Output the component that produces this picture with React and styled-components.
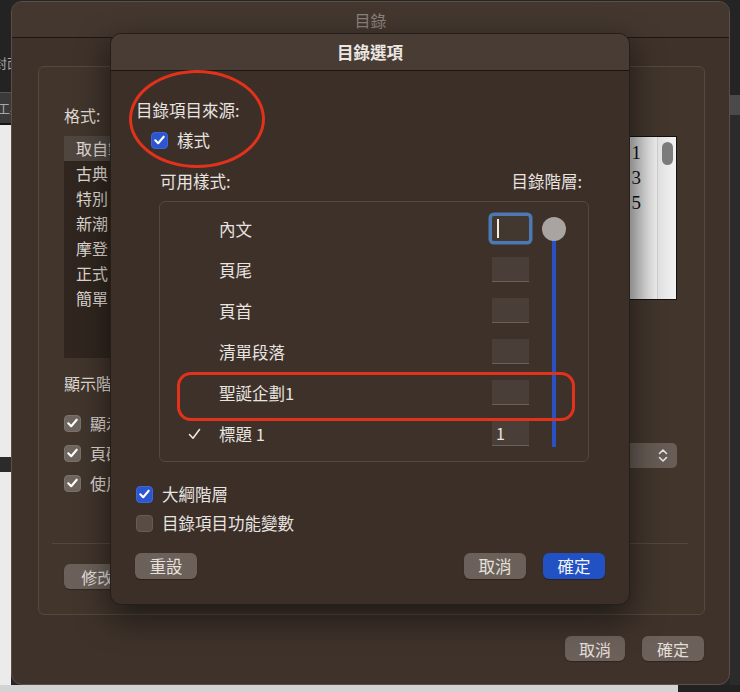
import React from 'react'
import styled, { createGlobalStyle } from 'styled-components'

const GlobalStyle = createGlobalStyle`
  html, body {
    margin: 0;
    padding: 0;
    background: #252525;
  }
  body {
    font-family: "Noto Sans CJK TC", "Noto Sans", sans-serif;
  }
  * {
    box-sizing: border-box;
  }
`

const formats = ['取自範本', '古典', '特別', '新潮', '摩登', '正式', '簡單']
const options = ['顯示頁碼', '頁碼靠右對齊', '使用超連結']
const previewPages = [1, 3, 5]
const styleRows = [
  { name: '內文', level: '', focused: true },
  { name: '頁尾', level: '' },
  { name: '頁首', level: '' },
  { name: '清單段落', level: '' },
  { name: '聖誕企劃1', level: '', marked: true },
  { name: '標題 1', level: '1', checked: true },
]

function CheckMark() {
  return (
    <svg width="11" height="10" viewBox="0 0 11 10">
      <path d="M1.3 5.3 L4.2 8.2 L9.7 1.7" fill="none" stroke="#fff" strokeWidth="2.1" strokeLinecap="round" strokeLinejoin="round" />
    </svg>
  )
}

function RowCheck() {
  return (
    <svg width="13" height="12" viewBox="0 0 13 12">
      <path d="M1.5 6.5 L5 10.2 L11.5 1.5" fill="none" stroke="#e8e4e0" strokeWidth="1.6" strokeLinecap="round" strokeLinejoin="round" />
    </svg>
  )
}

function UpDown() {
  return (
    <svg width="10" height="15" viewBox="0 0 10 15">
      <path d="M1.5 5.5 L5 2 L8.5 5.5 M1.5 9.5 L5 13 L8.5 9.5" fill="none" stroke="#e6e2de" strokeWidth="1.6" strokeLinecap="round" strokeLinejoin="round" />
    </svg>
  )
}

export default function App() {
  return (
    <>
      <GlobalStyle />
      <Desktop>
        <TopArea>
          <LeftStrip>
            <StripBlock $h={92} $bg="#232323">
              <StripText $top={53} $shift={-6}>封面頁</StripText>
            </StripBlock>
            <StripBlock $h={31} $bg="#3a3a3a" $line>
              <StripText $top={5} $shift={-3}>工具</StripText>
            </StripBlock>
            <StripBlock $h={334} $bg="#ebebeb" $edge />
            <StripBlock $h={15} $bg="#2b2b2b" />
            <StripBlock $h={213} $bg="#ebebeb" />
          </LeftStrip>

          <Window>
            <TitleBar>目錄</TitleBar>
            <WindowBody>
              <GroupBox>
                <GroupTop>
                  {/* only the left edge of this column shows beside the sheet */}
                  <LeftCol>
                    <FieldLabel>格式:</FieldLabel>
                    <FormatList>
                      {formats.map((f, i) => (
                        <FormatItem key={f} $selected={i === 0}>{f}</FormatItem>
                      ))}
                    </FormatList>
                    <FieldLabel $mt={15}>顯示階層:</FieldLabel>
                    <OptionList>
                      {options.map(o => (
                        <OptionRow key={o}>
                          <CheckBox $tone="grey"><CheckMark /></CheckBox>
                          <OptionText>{o}</OptionText>
                        </OptionRow>
                      ))}
                    </OptionList>
                  </LeftCol>
                  <RightCol>
                    <Preview>
                      <PreviewPage>
                        {previewPages.map(p => (
                          <PreviewLine key={p}>{p}</PreviewLine>
                        ))}
                      </PreviewPage>
                      <PreviewScroll>
                        <ScrollThumb />
                      </PreviewScroll>
                    </Preview>
                    <Popup>
                      <UpDown />
                    </Popup>
                  </RightCol>
                </GroupTop>
                <GroupRule />
                <PushButton $w={80}>修改...</PushButton>
              </GroupBox>
              <ButtonRow>
                <PushButton $w={60}>取消</PushButton>
                <PushButton $w={62}>確定</PushButton>
              </ButtonRow>
            </WindowBody>

            <Sheet>
              <SheetHeader>目錄選項</SheetHeader>
              <SheetBody>
                <Ellipse />
                <Label>目錄項目來源:</Label>
                <CheckLine $mt={10} $indent={15}>
                  <CheckBox $tone="blue"><CheckMark /></CheckBox>
                  <Label>樣式</Label>
                </CheckLine>
                <ColumnHeads>
                  <Label>可用樣式:</Label>
                  <Label>目錄階層:</Label>
                </ColumnHeads>
                <StyleTable>
                  <StyleRows>
                    {styleRows.map(r => (
                      <StyleRow key={r.name} $marked={r.marked}>
                        <CheckCell>{r.checked && <RowCheck />}</CheckCell>
                        <Label>{r.name}</Label>
                        <LevelField $focused={r.focused}>
                          {r.focused ? <Caret /> : r.level}
                        </LevelField>
                      </StyleRow>
                    ))}
                  </StyleRows>
                  <SliderColumn>
                    <Knob />
                    <Track />
                  </SliderColumn>
                </StyleTable>
                <CheckLine $mt={22}>
                  <CheckBox $tone="blue"><CheckMark /></CheckBox>
                  <Label>大綱階層</Label>
                </CheckLine>
                <CheckLine $mt={9}>
                  <CheckBox $tone="off" />
                  <Label>目錄項目功能變數</Label>
                </CheckLine>
                <SheetButtons>
                  <SheetButton>重設</SheetButton>
                  <Spacer />
                  <SheetButton>取消</SheetButton>
                  <SheetButton $primary>確定</SheetButton>
                </SheetButtons>
              </SheetBody>
            </Sheet>
          </Window>

          <RightStrip>
            <StripBlock $h={95} $bg="#242424" />
            <StripBlock $h={20} $bg="#4a4a4a" />
            <StripBlock $h={570} $bg="#2b2b2b" />
          </RightStrip>
        </TopArea>
        <BottomStrip />
      </Desktop>
    </>
  )
}

const Desktop = styled.div`
  width: 740px;
  height: 692px;
  display: flex;
  flex-direction: column;
  overflow: hidden;
  background: #252525;
`

const TopArea = styled.div`
  display: flex;
  height: 685px;
`

const LeftStrip = styled.div`
  width: 11px;
  display: flex;
  flex-direction: column;
  overflow: hidden;
`

const RightStrip = styled(LeftStrip)`
  width: 10px;
`

const StripBlock = styled.div`
  height: ${p => p.$h}px;
  flex-shrink: 0;
  background: ${p => p.$bg};
  border-top: ${p => (p.$line ? '1px solid #555' : p.$edge ? '2px solid #151515' : 'none')};
  overflow: hidden;
`

const StripText = styled.div`
  margin-top: ${p => p.$top}px;
  margin-left: ${p => p.$shift}px;
  font-size: 13px;
  color: #a8a8a8;
  white-space: nowrap;
`

const BottomStrip = styled.div`
  height: 7px;
  background: linear-gradient(to right, #d3d3d3 0, #d3d3d3 678px, #222 678px);
`

const Window = styled.div`
  position: relative;
  width: 719px;
  height: 684px;
  margin-top: 1px;
  flex-shrink: 0;
  display: flex;
  flex-direction: column;
  background: #3e322a;
  border: 1px solid #5b4f46;
  border-radius: 11px;
`

const TitleBar = styled.div`
  height: 36px;
  flex-shrink: 0;
  display: flex;
  align-items: center;
  justify-content: center;
  font-size: 16px;
  color: #8b827a;
  background: #43372f;
  border-bottom: 1px solid #1d1713;
  border-radius: 10px 10px 0 0;
`

const WindowBody = styled.div`
  flex: 1;
  display: flex;
  flex-direction: column;
  padding: 28px 24px 0 26px;
`

const GroupBox = styled.div`
  height: 549px;
  display: flex;
  flex-direction: column;
  padding: 38px 27px 0 25px;
  background: #41352c;
  border: 1px solid #54483f;
  border-radius: 6px;
`

const GroupTop = styled.div`
  height: 438px;
  display: flex;
  justify-content: space-between;
`

const LeftCol = styled.div`
  width: 48px;
  display: flex;
  flex-direction: column;
  overflow: hidden;
`

const FieldLabel = styled.div`
  margin-top: ${p => p.$mt || 0}px;
  font-size: 16px;
  line-height: 20px;
  color: #ddd7d1;
  white-space: nowrap;
`

const FormatList = styled.div`
  margin-top: 11px;
  height: 222px;
  background: #30261f;
`

const FormatItem = styled.div`
  height: 25px;
  line-height: 25px;
  padding-left: 12px;
  font-size: 16px;
  color: #ddd7d1;
  white-space: nowrap;
  background: ${p => (p.$selected ? '#4f4640' : 'transparent')};
`

const OptionList = styled.div`
  margin-top: 20px;
  display: flex;
  flex-direction: column;
  gap: 10px;
`

const OptionRow = styled.div`
  display: flex;
  align-items: center;
  gap: 9px;
  height: 20px;
`

const OptionText = styled.span`
  font-size: 16px;
  color: #ddd7d1;
  white-space: nowrap;
`

const CheckBox = styled.span`
  width: 17px;
  height: 17px;
  flex-shrink: 0;
  display: flex;
  align-items: center;
  justify-content: center;
  border-radius: 4px;
  background: ${p => (p.$tone === 'blue' ? '#2b56cf' : p.$tone === 'grey' ? '#6e655e' : '#574d46')};
  border: 1px solid ${p => (p.$tone === 'blue' ? '#3d66d8' : p.$tone === 'grey' ? '#7a716a' : '#675c54')};
`

const RightCol = styled.div`
  width: 230px;
  padding-top: 31px;
  display: flex;
  flex-direction: column;
`

const Preview = styled.div`
  height: 164px;
  display: flex;
  border: 1px solid #111;
  background: #f6f6f6;
`

const PreviewPage = styled.div`
  flex: 1;
  padding: 3px 16px 0 12px;
  background: linear-gradient(to right, #f8f8f8 0, #f8f8f8 calc(100% - 30px), #c3c3c3 calc(100% - 26px), #ededed 100%);
`

const PreviewLine = styled.div`
  text-align: right;
  font-family: "Liberation Serif", serif;
  font-size: 19px;
  line-height: 25px;
  color: #111;
`

const PreviewScroll = styled.div`
  width: 19px;
  padding: 5px 0 0 4px;
  border-left: 1px solid #d0d0d0;
  background: linear-gradient(to right, #e3e3e3, #f2f2f2);
`

const ScrollThumb = styled.div`
  width: 11px;
  height: 23px;
  border-radius: 6px;
  background: #7c7c7c;
`

const Popup = styled.div`
  margin-top: 143px;
  height: 25px;
  display: flex;
  align-items: center;
  justify-content: flex-end;
  padding: 0 9px 0 10px;
  border-radius: 5px;
  background: linear-gradient(to right, #4c4139, #685e57);
`

const GroupRule = styled.div`
  height: 1px;
  margin: 0 -11px 0 -12px;
  background: #54483f;
`

const PushButton = styled.div`
  width: ${p => p.$w}px;
  height: 25px;
  margin-top: 20px;
  display: flex;
  align-items: center;
  justify-content: center;
  font-size: 16px;
  color: #e3ded9;
  background: #6b615a;
  border-radius: 6px;
  box-shadow: 0 1px 1px rgba(0, 0, 0, 0.25);
`

const ButtonRow = styled.div`
  display: flex;
  justify-content: flex-end;
  gap: 17px;
  padding-right: 1px;
  margin-top: 1px;
`

const Sheet = styled.div`
  position: absolute;
  left: 98px;
  top: 31px;
  width: 520px;
  height: 572px;
  display: flex;
  flex-direction: column;
  background: #3b2f28;
  border: 1px solid #261e19;
  border-radius: 11px;
  box-shadow: 0 12px 32px rgba(0, 0, 0, 0.55), inset 0 1px 0 rgba(255, 255, 255, 0.08);
`

const SheetHeader = styled.div`
  height: 37px;
  flex-shrink: 0;
  display: flex;
  align-items: center;
  justify-content: center;
  font-size: 16.5px;
  font-weight: 600;
  color: #ebe7e3;
  background: #483c34;
  border-bottom: 1px solid #1c1613;
  border-radius: 10px 10px 0 0;
`

const SheetBody = styled.div`
  position: relative;
  flex: 1;
  display: flex;
  flex-direction: column;
  padding: 29px 24px 0 25px;
`

const Ellipse = styled.div`
  position: absolute;
  left: 18px;
  top: -1px;
  width: 136px;
  height: 98px;
  border: 3px solid #e2321c;
  border-radius: 50%;
  pointer-events: none;
`

const Label = styled.span`
  font-size: 16.5px;
  line-height: 20px;
  color: #e8e4e0;
  white-space: nowrap;
`

const CheckLine = styled.div`
  margin-top: ${p => p.$mt}px;
  margin-left: ${p => p.$indent || 0}px;
  height: 20px;
  display: flex;
  align-items: center;
  gap: 9px;
`

const ColumnHeads = styled.div`
  margin-top: 21px;
  padding: 0 23px 0 24px;
  display: flex;
  justify-content: space-between;
`

const StyleTable = styled.div`
  margin: 10px 0 0 23px;
  width: 430px;
  height: 261px;
  display: flex;
  background: #3d3129;
  border: 1px solid #54483f;
  border-radius: 6px;
`

const StyleRows = styled.div`
  width: 369px;
  padding-top: 6px;
  display: flex;
  flex-direction: column;
`

const StyleRow = styled.div`
  position: relative;
  height: 41px;
  display: grid;
  grid-template-columns: 31px 1fr 37px;
  align-items: center;
  padding-left: 28px;

  &::after {
    content: "";
    display: ${p => (p.$marked ? 'block' : 'none')};
    position: absolute;
    left: 17px;
    top: 0;
    width: 392px;
    height: 43px;
    border: 3px solid #e2321c;
    border-radius: 14px;
    pointer-events: none;
    z-index: 2;
  }
`

const CheckCell = styled.span`
  display: flex;
  align-items: center;
`

const LevelField = styled.div`
  width: 37px;
  height: 25px;
  padding-left: 4px;
  display: flex;
  align-items: center;
  font-size: 16px;
  color: #e8e4e0;
  background: ${p => (p.$focused ? '#43382f' : '#4a3f38')};
  border-bottom: 1px solid ${p => (p.$focused ? 'transparent' : '#6b6058')};
  box-shadow: ${p => (p.$focused ? '0 0 0 3.5px #4c78b4' : 'none')};
  border-radius: ${p => (p.$focused ? '2px' : '0')};
`

const Caret = styled.span`
  width: 2px;
  height: 19px;
  margin-left: 1px;
  background: #f0ece8;
`

const SliderColumn = styled.div`
  width: 59px;
  padding: 15px 0 0 13px;
  display: flex;
  flex-direction: column;
`

const Knob = styled.div`
  position: relative;
  z-index: 1;
  width: 24px;
  height: 24px;
  border-radius: 50%;
  background: #a9a4a1;
`

const Track = styled.div`
  width: 4px;
  height: 218px;
  margin: -12px 0 0 10px;
  background: #2a51c4;
`

const SheetButtons = styled.div`
  margin-top: 20px;
  margin-left: -1px;
  display: flex;
  gap: 17px;
`

const Spacer = styled.div`
  flex: 1;
`

const SheetButton = styled.div`
  width: 62px;
  height: 26px;
  display: flex;
  align-items: center;
  justify-content: center;
  font-size: 16.5px;
  color: ${p => (p.$primary ? '#f2f4fa' : '#e6e1dc')};
  background: ${p => (p.$primary ? '#2151c3' : '#6b615a')};
  border-radius: 6px;
  box-shadow: 0 1px 1px rgba(0, 0, 0, 0.3);
`
